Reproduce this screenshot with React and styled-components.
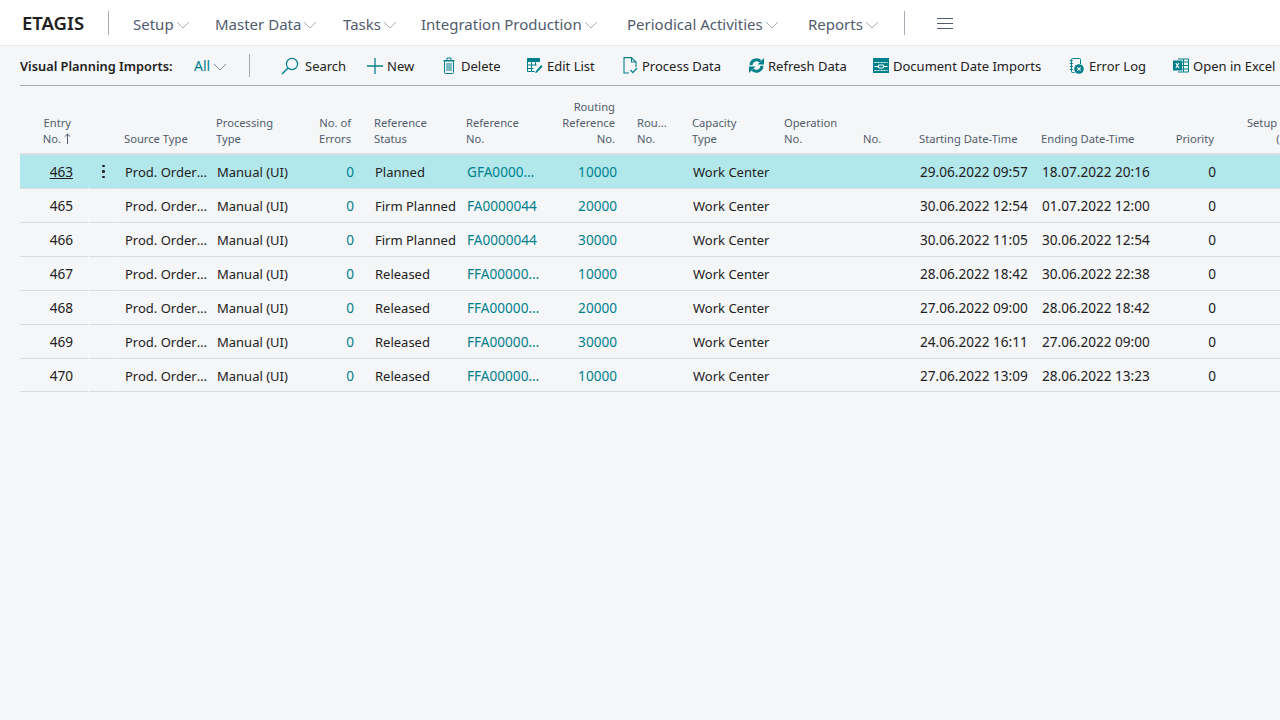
import React from "react";
import styled, { createGlobalStyle } from "styled-components";

const TEAL = "#00808c";
const SLATE = "#505c6d";

const GlobalStyle = createGlobalStyle`
  html, body {
    margin: 0;
    height: 100%;
    background: #f5f6f8;
    overflow: hidden;
  }
  body {
    font-family: "Noto Sans", "Open Sans", "Liberation Sans", sans-serif;
    color: #212121;
  }
`;

const navItems = [
  { label: "Setup", width: 82 },
  { label: "Master Data", width: 128 },
  { label: "Tasks", width: 78 },
  { label: "Integration Production", width: 206 },
  { label: "Periodical Activities", width: 181 },
  { label: "Reports", width: 96 },
];

const columns = [
  { key: "entry", w: 68, label: ["Entry", "No."], right: true, num: true, headPad: 17, cellPad: 15, sorted: true },
  { key: "menu", w: 30, label: [] },
  { key: "source", w: 92, label: ["Source Type"], tight: true },
  { key: "processing", w: 86, label: ["Processing", "Type"] },
  { key: "errors", w: 72, label: ["No. of", "Errors"], right: true, link: true, num: true, headPad: 17 },
  { key: "status", w: 92, label: ["Reference", "Status"], open: true },
  { key: "ref", w: 86, label: ["Reference", "No."], link: true, num: true },
  { key: "routing", w: 85, label: ["Routing", "Reference", "No."], right: true, link: true, num: true },
  { key: "rou", w: 55, label: ["Rou...", "No."] },
  { key: "capacity", w: 92, label: ["Capacity", "Type"] },
  { key: "operation", w: 79, label: ["Operation", "No."] },
  { key: "no", w: 56, label: ["No."] },
  { key: "start", w: 122, label: ["Starting Date-Time"], num: true },
  { key: "end", w: 122, label: ["Ending Date-Time"], num: true },
  { key: "priority", w: 73, label: ["Priority"], right: true, num: true },
  { key: "setup", w: 94, label: ["Setup Time", "(Min.)"], right: true, headPad: 18 },
];

const rows = [
  ["463", "Planned", "GFA0000155", "10000", "29.06.2022 09:57", "18.07.2022 20:16"],
  ["465", "Firm Planned", "FA0000044", "20000", "30.06.2022 12:54", "01.07.2022 12:00"],
  ["466", "Firm Planned", "FA0000044", "30000", "30.06.2022 11:05", "30.06.2022 12:54"],
  ["467", "Released", "FFA0000033", "10000", "28.06.2022 18:42", "30.06.2022 22:38"],
  ["468", "Released", "FFA0000033", "20000", "27.06.2022 09:00", "28.06.2022 18:42"],
  ["469", "Released", "FFA0000033", "30000", "24.06.2022 16:11", "27.06.2022 09:00"],
  ["470", "Released", "FFA0000034", "10000", "27.06.2022 13:09", "28.06.2022 13:23"],
].map(([entry, status, ref, routing, start, end]) => ({
  entry,
  source: "Prod. Order Routing Line",
  processing: "Manual (UI)",
  errors: "0",
  status,
  ref,
  routing,
  capacity: "Work Center",
  start,
  end,
  priority: "0",
}));

const Chevron = () => (
  <svg width="14" height="8" viewBox="0 0 14 8" fill="none" stroke="currentColor" strokeWidth="1">
    <path d="M1 1l6 6 6-6" />
  </svg>
);

const SortArrow = () => (
  <svg width="7" height="11" viewBox="0 0 7 11" fill="none" stroke={SLATE} strokeWidth="1">
    <path d="M3.5 11V1M.8 3.6L3.5 1l2.7 2.6" />
  </svg>
);

const SearchIcon = () => (
  <svg width="18" height="18" viewBox="0 0 18 18" fill="none" stroke={TEAL} strokeWidth="1.2">
    <circle cx="11" cy="7" r="5.6" />
    <path d="M7 11l-6 6" strokeWidth="1.5" />
  </svg>
);

const PlusIcon = () => (
  <svg width="16" height="16" viewBox="0 0 16 16" stroke={TEAL} strokeWidth="1.3">
    <path d="M8 0v16M0 8h16" />
  </svg>
);

const TrashIcon = () => (
  <svg width="12" height="17" viewBox="0 0 12 17" fill="none" stroke={TEAL} strokeWidth="1">
    <path d="M1.5 4h9v11.5a1 1 0 0 1-1 1h-7a1 1 0 0 1-1-1zM.5 3.5h11M4 3V1h4v2" />
    <path d="M4 6v8M6 6v8M8 6v8" />
  </svg>
);

const EditListIcon = () => (
  <svg width="16" height="15" viewBox="0 0 16 15" fill="none">
    <path d="M.5.5h12v3H.5z" fill={TEAL} stroke={TEAL} />
    <path d="M.5 3.5v10h7M4.5 3.5v10M8.5 3.5v4M.5 7h9M.5 10.5h6" stroke={TEAL} />
    <path d="M9 13l-1 2 2-.6 5.5-6-1.4-1.4z" fill={TEAL} />
  </svg>
);

const ProcessIcon = () => (
  <svg width="15" height="17" viewBox="0 0 15 17" fill="none" stroke={TEAL} strokeWidth="1.1">
    <path d="M6 16H1V.6h7.5L13 5v5M8.5.6V5H13" />
    <path d="M7.5 13l2.4 2.6L14 11" strokeWidth="1.3" />
  </svg>
);

const RefreshIcon = () => (
  <svg width="15" height="15" viewBox="0 0 15 15" fill="none" stroke={TEAL} strokeWidth="3">
    <path d="M2 7.2a5.5 5.5 0 0 1 9.4-3.8" />
    <path d="M13 7.8a5.5 5.5 0 0 1-9.4 3.8" />
    <path d="M8.5 6.5H15V0zM6.5 8.5H0V15z" fill={TEAL} stroke="none" />
  </svg>
);

const DocDateIcon = () => (
  <svg width="16" height="15" viewBox="0 0 16 15" fill="none">
    <path d="M0 0h16v15H0z" fill={TEAL} />
    <g stroke="#fff" strokeWidth="1">
      <path d="M1.5 4.5h13M1.5 12.5h13" strokeDasharray="2 1" />
      <path d="M5.5 7h5v3h-5zM1.5 8.5h4M10.5 8.5h4" />
    </g>
  </svg>
);

const ErrorLogIcon = () => (
  <svg width="15" height="17" viewBox="0 0 15 17" fill="none">
    <path d="M5.5 15.5H3.5a1 1 0 0 1-1-1v-12a1 1 0 0 1 1-1h7a1 1 0 0 1 1 1V7" stroke={TEAL} />
    <path d="M.8 3.5h3M.8 6.5h3M.8 9.5h3M.8 12.5h3" stroke={TEAL} />
    <circle cx="10" cy="12" r="4.8" fill={TEAL} />
    <path d="M8.3 10.3l3.4 3.4M11.7 10.3l-3.4 3.4" stroke="#fff" strokeWidth="1.1" />
  </svg>
);

const ExcelIcon = () => (
  <svg width="16" height="15" viewBox="0 0 16 15" fill="none">
    <path d="M5 1h10.5v13H5" stroke={TEAL} />
    <path d="M5 4h10.5M5 7.5h10.5M5 11h10.5M10.5 1v13" stroke={TEAL} />
    <path d="M0 2.5h9v10H0z" fill={TEAL} />
    <path d="M2.8 5l3.2 5M6 5l-3.2 5" stroke="#fff" strokeWidth="1.1" />
  </svg>
);

const actions = [
  { label: "Search", icon: <SearchIcon />, width: 86, gap: 6 },
  { label: "New", icon: <PlusIcon />, width: 76, gap: 4 },
  { label: "Delete", icon: <TrashIcon />, width: 84, gap: 6 },
  { label: "Edit List", icon: <EditListIcon />, width: 96, gap: 4 },
  { label: "Process Data", icon: <ProcessIcon />, width: 126, gap: 4 },
  { label: "Refresh Data", icon: <RefreshIcon />, width: 124, gap: 4 },
  { label: "Document Date Imports", icon: <DocDateIcon />, width: 196, gap: 4 },
  { label: "Error Log", icon: <ErrorLogIcon />, width: 104, gap: 5 },
  { label: "Open in Excel", icon: <ExcelIcon />, width: 110, gap: 4 },
];

const Page = styled.div`
  width: 1280px;
  height: 720px;
  overflow: hidden;
`;

const TopBar = styled.header`
  display: flex;
  align-items: center;
  height: 45px;
  background: #fff;
  border-bottom: 1px solid #eaebed;
`;

const Brand = styled.div`
  flex: none;
  width: 86px;
  margin-left: 22px;
  height: 24px;
  border-right: 1px solid #a6acb5;
  font-size: 18.5px;
  line-height: 24px;
  font-weight: 600;
  color: #212121;
`;

const Nav = styled.nav`
  display: flex;
  margin-left: 24px;
  padding-top: 2px;
`;

const NavItem = styled.div`
  display: flex;
  align-items: center;
  gap: 2px;
  width: ${(p) => p.$width}px;
  font-size: 15px;
  color: ${SLATE};
  white-space: nowrap;
  svg {
    color: #a9afb8;
    margin-top: 2px;
  }
`;

const BarDivider = styled.div`
  width: 1px;
  height: 24px;
  background: #a6acb5;
`;

const Hamburger = styled.div`
  width: 16px;
  height: 9px;
  margin: 2px 0 0 32px;
  border-top: 1px solid ${SLATE};
  border-bottom: 1px solid ${SLATE};
  position: relative;
  &::after {
    content: "";
    position: absolute;
    left: 0;
    right: 0;
    top: 4px;
    height: 1px;
    background: ${SLATE};
  }
`;

const ActionBar = styled.div`
  display: flex;
  align-items: center;
  height: 39px;
  margin-left: 20px;
  border-bottom: 1px solid #a6acb5;
  white-space: nowrap;
`;

const ViewTitle = styled.div`
  flex: none;
  width: 174px;
  font-size: 12.8px;
  font-weight: 600;
  color: #212121;
`;

const ViewFilter = styled.div`
  flex: none;
  display: flex;
  align-items: center;
  gap: 3px;
  width: 55px;
  font-size: 14px;
  color: ${TEAL};
  svg {
    color: #7b8794;
    margin-top: 2px;
  }
`;

const ActionDivider = styled.div`
  flex: none;
  width: 1px;
  height: 23px;
  background: #a6acb5;
  margin-right: 31px;
`;

const Action = styled.button`
  display: flex;
  align-items: center;
  gap: ${(p) => p.$gap}px;
  flex: none;
  width: ${(p) => p.$width}px;
  padding: 0;
  border: 0;
  background: none;
  font: inherit;
  font-size: 13px;
  color: #212121;
  svg {
    flex: none;
  }
`;

const Grid = styled.div`
  width: 1304px;
  margin-left: 20px;
`;

const HeadRow = styled.div`
  display: grid;
  grid-template-columns: ${columns.map((c) => `${c.w}px`).join(" ")};
  height: 67px;
  border-bottom: 2px solid #dcdfe4;
  box-sizing: content-box;
`;

const HeadCell = styled.div`
  display: flex;
  flex-direction: column;
  justify-content: flex-end;
  padding: 0 ${(p) => p.$pad}px 6px 6px;
  font-size: 11.2px;
  line-height: 16px;
  color: ${SLATE};
  text-align: ${(p) => (p.$right ? "right" : "left")};
  white-space: nowrap;
  svg {
    margin-left: 3px;
    vertical-align: -1px;
  }
`;

const BodyRow = styled.div`
  display: grid;
  grid-template-columns: ${columns.map((c) => `${c.w}px`).join(" ")};
  height: 33px;
  background: ${(p) => (p.$selected ? "#b2e8ec" : "transparent")};
  border-bottom: 1px solid #d9dce1;
  box-sizing: content-box;
  &:last-child {
    height: 32px;
  }
`;

const Cell = styled.div`
  padding: 0 ${(p) => p.$pad}px 0 7px;
  font-size: ${(p) => (p.$num ? "13.6px" : "13px")};
  line-height: ${(p) => (p.$num ? "33px" : "34px")};
  color: ${(p) => (p.$link ? TEAL : "#212121")};
  text-align: ${(p) => (p.$right ? "right" : "left")};
  white-space: nowrap;
  overflow: hidden;
  text-overflow: ellipsis;
  text-decoration: ${(p) => (p.$underline ? "underline" : "none")};
`;

const Dots = styled.div`
  position: relative;
  display: flex;
  flex-direction: column;
  align-items: center;
  justify-content: center;
  gap: 3px;
  padding-left: 1px;
  i {
    width: 2.4px;
    height: 2.4px;
    background: #212121;
    border-radius: 50%;
  }
  &::before,
  &::after {
    content: "";
    position: absolute;
    bottom: -1px;
    width: 1px;
    height: 1px;
    background: #f5f6f8;
  }
  &::before {
    left: 0;
  }
  &::after {
    right: 0;
  }
`;

const cellPadding = (c) => {
  if (c.cellPad) return c.cellPad;
  if (c.right) return 14;
  if (c.open) return 0;
  return c.tight ? 2 : 5;
};

export default function App() {
  return (
    <Page>
      <GlobalStyle />
      <TopBar>
        <Brand>ETAGIS</Brand>
        <Nav>
          {navItems.map((item) => (
            <NavItem key={item.label} $width={item.width}>
              {item.label}
              <Chevron />
            </NavItem>
          ))}
        </Nav>
        <BarDivider />
        <Hamburger />
      </TopBar>
      <ActionBar>
        <ViewTitle>Visual Planning Imports:</ViewTitle>
        <ViewFilter>
          All
          <Chevron />
        </ViewFilter>
        <ActionDivider />
        {actions.map((a) => (
          <Action key={a.label} $width={a.width} $gap={a.gap}>
            {a.icon}
            {a.label}
          </Action>
        ))}
      </ActionBar>
      <Grid>
        <HeadRow>
          {columns.map((c) => (
            <HeadCell key={c.key} $right={c.right} $pad={c.headPad || (c.right ? 16 : 6)}>
              {c.label.map((line, n) => (
                <span key={line}>
                  {line}
                  {c.sorted && n === c.label.length - 1 && <SortArrow />}
                </span>
              ))}
            </HeadCell>
          ))}
        </HeadRow>
        {rows.map((row, i) => (
          <BodyRow key={row.entry} $selected={i === 0}>
            {columns.map((c) =>
              c.key === "menu" ? (
                <Dots key={c.key}>
                  {i === 0 && (
                    <>
                      <i />
                      <i />
                      <i />
                    </>
                  )}
                </Dots>
              ) : (
                <Cell
                  key={c.key}
                  $right={c.right}
                  $link={c.link}
                  $num={c.num}
                  $pad={cellPadding(c)}
                  $underline={c.key === "entry" && i === 0}
                >
                  {row[c.key]}
                </Cell>
              )
            )}
          </BodyRow>
        ))}
      </Grid>
    </Page>
  );
}
